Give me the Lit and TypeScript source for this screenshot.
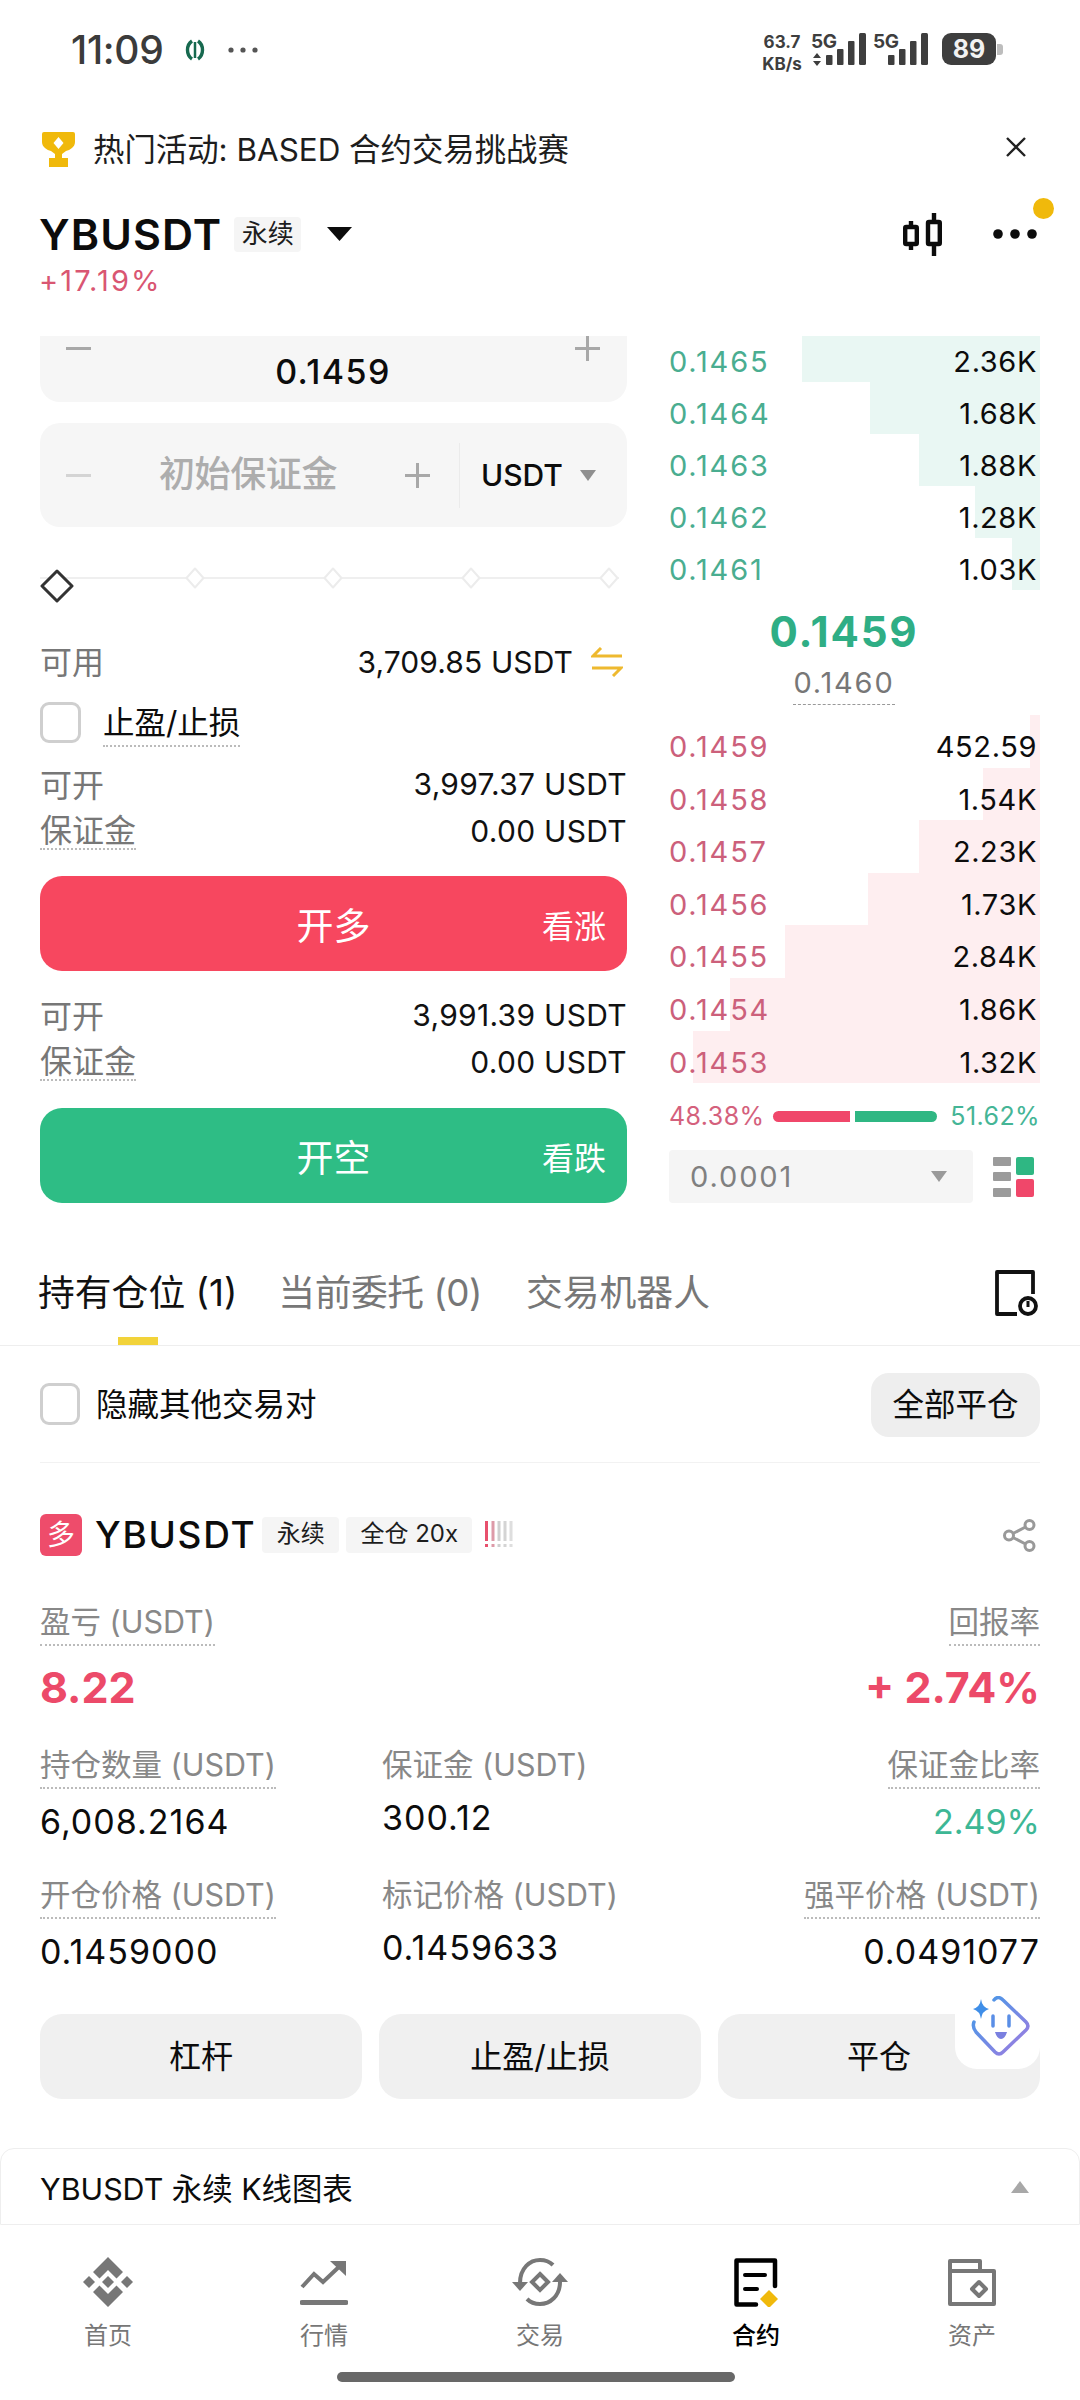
import { LitElement, html, css } from "lit";
import { customElement } from "lit/decorators.js";

const asks = [["0.1465","2.36K",238],["0.1464","1.68K",170],["0.1463","1.88K",121],["0.1462","1.28K",65],["0.1461","1.03K",28]] as const;
const bids = [["0.1459","452.59",10],["0.1458","1.54K",57],["0.1457","2.23K",121],["0.1456","1.73K",172],["0.1455","2.84K",255],["0.1454","1.86K",310],["0.1453","1.32K",347]] as const;

const sign = (plus: boolean, color: string) => html`<svg class="sign" viewBox="0 0 25 25" fill="none" stroke=${color} stroke-width="3"><path d=${plus ? "M0 12.5H25M12.5 0V25" : "M0 12.5H25"}></path></svg>`;
const tri = (cls: string, color = "#8f8f8f") => html`<svg class=${cls} viewBox="0 0 16 11"><path d="M0 0H16L8 11Z" fill=${color}></path></svg>`;
const bars = () => html`<svg class="bars" viewBox="0 0 40 32"><g fill="#3e3e3e"><rect x="0" y="22" width="6.5" height="10" rx="1"></rect><rect x="11" y="16" width="6.5" height="16" rx="1"></rect><rect x="22" y="8" width="6.5" height="24" rx="1"></rect><rect x="33" y="0" width="7" height="32" rx="1.5"></rect></g></svg>`;

@customElement("app-root")
export class AppRoot extends LitElement {
  static styles = css`
    :host { display: block; position: relative; width: 1080px; height: 2400px; overflow: hidden; background: #fff; color: #0c0c0c; font-family: Inter, "Noto Sans CJK SC", sans-serif; }
    svg { display: block; flex: none; }
    .status { height: 100px; box-sizing: border-box; padding: 31px 77px 0 71px; display: flex; align-items: flex-start; }
    .time { font: 500 39px/38px Inter, sans-serif; color: #3b3b3b; width: 114px; letter-spacing: -0.3px; }
    .applogo { width: 20px; height: 22px; margin-top: 8px; }
    .sdots { width: 30px; height: 6px; margin: 16px 0 0 23px; }
    .sright { margin-left: auto; display: flex; align-items: flex-start; color: #3e3e3e; font-weight: 700; font-size: 17px; line-height: 22px; margin-right: 0; }
    .speed { width: 48px; text-align: center; margin-left: -4px; white-space: nowrap; }
    .net { display: flex; width: 55px; margin-left: 5px; }
    .net + .net { margin-left: 7px; }
    .gcol { width: 26px; flex: none; font-size: 19px; letter-spacing: -0.5px; }
    .arrows { width: 8px; height: 13px; margin: 0 0 0 2px; }
    .bars { width: 40px; height: 32px; margin: 2px 0 0 -11px; }
    .battery { width: 54px; height: 32px; margin: 2px 0 0 14px; background: #3e3e3e; border-radius: 9px; color: #f2f2f2; font-size: 25px; line-height: 32px; text-align: center; flex: none; }
    .nub { width: 6px; height: 11px; margin: 13px 0 0 1px; background: #bdbdbd; border-radius: 0 3px 3px 0; flex: none; }

    .banner { height: 98px; box-sizing: border-box; padding: 0 54px 4px 42px; display: flex; align-items: center; font-size: 31.4px; color: #1d1d1d; }
    .trophy { width: 33px; height: 35px; margin: 4px 18px 0 0; }
    .close { width: 20px; height: 20px; margin: 0 0 0 auto; }

    .head { height: 72px; box-sizing: border-box; padding: 0 43px 0 39px; display: flex; align-items: center; }
    .sym { font-size: 43px; font-weight: 600; letter-spacing: 1.1px; line-height: 50px; }
    .tag { background: #f5f5f5; border-radius: 4px; font-size: 26px; color: #1d1d1d; }
    .head .tag { margin-left: 12px; width: 67px; height: 35px; line-height: 33px; text-align: center; }
    .caret { width: 25px; height: 14px; margin-left: 26px; }
    .candle { width: 39px; height: 43px; margin-left: auto; }
    .dots { width: 44px; height: 10px; margin-left: 51px; }
    .ydot { position: absolute; left: 1033px; top: 198px; width: 21px; height: 21px; border-radius: 50%; background: #f0b90b; }
    .chg { height: 66px; padding-left: 39px; font-size: 29px; letter-spacing: 2.1px; line-height: 22px; box-sizing: border-box; color: #d95672; }

    .trade { height: 874px; overflow: hidden; padding: 0 40px; display: flex; gap: 42px; }
    .left { width: 587px; flex: none; }
    .right { width: 371px; flex: none; }
    .sign { width: 25px; height: 25px; }
    .input { background: #f6f6f6; border-radius: 20px; }
    .i1 { height: 66px; padding: 0 27px 0 26px; border-radius: 0 0 20px 20px; display: flex; justify-content: space-between; align-items: flex-start; font-size: 34px; letter-spacing: 1.4px; }
    .i1 .val { line-height: 44px; margin-top: 14px; font-weight: 500; }
    .i2 { height: 104px; margin-top: 21px; padding-left: 26px; display: flex; align-items: center; }
    .ph { width: 177px; margin-left: 68px; font-size: 36px; line-height: 40px; margin-top: -3px; color: #adadad; font-weight: 500; white-space: nowrap; letter-spacing: -0.4px; }
    .i2 .plus { margin-left: 69px; width: 27px; }
    .i2 .sep { width: 1px; height: 65px; background: #ebebeb; margin-left: 27px; }
    .unit { font-size: 30px; font-weight: 500; margin-left: 21px; width: 81px; }
    .t1 { width: 16px; height: 11px; margin-left: 18px; }

    .slider { margin-top: 34px; height: 34px; display: flex; align-items: center; width: 579px; background: linear-gradient(#efefef, #efefef) center / 100% 2px no-repeat; }
    .dia { width: 20px; height: 22px; margin-left: 118px; }
    .dia.first { margin-left: 111px; }
    .dia.big { width: 34px; height: 34px; margin-left: 0; }

    .kv { display: flex; align-items: center; justify-content: space-between; height: 36px; font-size: 30px; color: #111; letter-spacing: 0.3px; }
    .k { color: #777; font-size: 32px; letter-spacing: 0; }
    .u { border-bottom: 2px dotted #bbb; }
    .avail { margin-top: 47px; height: 40px; }
    .avail .k { margin-top: -5px; }
    .avail .r { display: flex; align-items: center; gap: 18px; padding-right: 4px; letter-spacing: 0.1px; }
    .sw { width: 32px; height: 30px; }
    .stop { margin-top: 20px; height: 40px; display: flex; align-items: center; font-size: 31.5px; }
    .box { width: 36px; height: 36px; border: 3px solid #cfcfcf; border-radius: 9px; flex: none; box-sizing: content-box; }
    .stop .box { margin-right: 22px; width: 35px; height: 35px; }
    .stop span { line-height: 44px; margin-top: 4px; }
    .kv .k.u { line-height: 34px; margin-top: 4px; }
    .g1 { margin-top: 24px; }
    .g1 .k { margin-top: -3px; }
    .g2 { margin-top: 10px; }
    .g2 > span:last-child { margin-top: 2px; }
    .btn { height: 95px; border-radius: 22px; color: #fff; display: flex; align-items: center; justify-content: center; position: relative; font-size: 37px; font-weight: 400; }
    .btn small { position: absolute; right: 21px; font-size: 32px; font-weight: 400; }
    .long { background: #f7475f; margin-top: 28px; }
    .short { background: #2ebd85; margin-top: 29px; }
    .g3 { margin-top: 26px; }

    .book { margin-top: -6px; }
    .row { display: flex; justify-content: space-between; box-sizing: border-box; height: 52px; padding: 11px 3px 0 0; line-height: 42px; font-size: 29px; letter-spacing: 1.8px; background-repeat: no-repeat; background-position: right top; }
    .row span:last-child { letter-spacing: 0.6px; }
    .asks .row { background-image: linear-gradient(#e9f7f3, #e9f7f3); }
    .bids .row { height: 52.6px; background-image: linear-gradient(#feeef0, #feeef0); }
    .asks .p { color: #4aad90; }
    .bids .p { color: #cc607b; }
    .mid { height: 125px; display: flex; flex-direction: column; align-items: center; box-sizing: border-box; padding-top: 17px; width: 350px; }
    .last { font-size: 42px; font-weight: 700; line-height: 50px; color: #2fae85; letter-spacing: 1.8px; }
    .mark { font-size: 29px; line-height: 36px; margin-top: 8px; color: #777; padding-bottom: 3px; border-bottom: 1px dashed #999; letter-spacing: 1.8px; }
    .ratio { margin-top: 15px; display: flex; align-items: center; height: 36px; font-size: 25px; letter-spacing: 0.4px; }
    .ratio .a { color: #d4607c; width: 104px; }
    .ratio .b { color: #45b596; margin-left: auto; }
    .rbar { height: 11px; width: 164px; display: flex; gap: 5px; }
    .rbar i { display: block; height: 11px; }
    .rbar .ri { width: 77px; background: #f0476a; border-radius: 6px 0 0 6px; }
    .rbar .gi { width: 82px; background: #2fb783; border-radius: 0 6px 6px 0; }
    .foot { display: flex; align-items: center; margin-top: 16px; }
    .sel { width: 304px; height: 53px; box-sizing: border-box; padding: 0 26px 0 21px; background: #f5f5f5; border-radius: 4px; display: flex; align-items: center; justify-content: space-between; font-size: 29px; color: #808080; letter-spacing: 1.9px; }
    .sel svg { width: 16px; height: 11px; }
    .lay { width: 41px; height: 40px; margin-left: 20px; }

    .tabs { height: 136px; box-sizing: border-box; border-bottom: 1px solid #eee; padding: 60px 42px 0 38px; display: flex; align-items: flex-start; font-size: 36.8px; color: #777; line-height: 46px; }
    .tab { margin-right: 44px; white-space: nowrap; }
    .tab.on { color: #111; margin-right: 41px; }
    .tab.mid-tab { letter-spacing: -0.5px; }
    .ind { width: 40px; height: 8px; background: #f2d33a; margin: 21px 0 0 80px; }
    .hist { width: 43px; height: 46px; margin-left: auto; }

    .pos { padding: 0 40px; }
    .filter { height: 117px; box-sizing: border-box; padding-top: 27px; border-bottom: 1px solid #f2f2f2; display: flex; align-items: flex-start; font-size: 31.5px; }
    .filter .box { margin: 10px 16px 0 0; width: 34px; height: 36px; }
    .filter .txt { line-height: 64px; }
    .all { margin-left: auto; width: 169px; height: 64px; line-height: 64px; text-align: center; background: #eeeeee; border-radius: 18px; }

    .phead { margin-top: 51px; height: 42px; display: flex; align-items: center; }
    .duo { width: 42px; height: 42px; background: #ee4c6b; border-radius: 6px; color: #fff; font-size: 28px; line-height: 42px; text-align: center; flex: none; }
    .phead .sym { font-size: 37px; margin-left: 13px; font-weight: 500; letter-spacing: 1.7px; }
    .phead .tag { font-size: 24px; height: 36px; line-height: 34px; text-align: center; margin-left: 6px; }
    .phead .tag.a { width: 77px; }
    .phead .tag.b { width: 126px; margin-left: 7px; }
    .warn { width: 28px; height: 28px; margin-left: 13px; }
    .share { width: 33px; height: 33px; margin-left: auto; margin-right: 4px; }

    .line { display: flex; align-items: flex-start; }
    .cell { flex: none; }
    .cell.c1 { width: 342px; }
    .cell.end { margin-left: auto; text-align: right; display: flex; flex-direction: column; align-items: flex-end; }
    .lb { display: inline-block; font-size: 30.5px; line-height: 40px; color: #888; padding-bottom: 2px; border-bottom: 2px dotted transparent; white-space: nowrap; }
    .lb.u { border-bottom: 2px dotted #bbb; }
    .v { font-size: 34px; line-height: 40px; margin-top: 13px; letter-spacing: 1px; }
    .mv { margin-top: 9px; }
    .gv { color: #3db795; letter-spacing: 0; }
    .big { font-size: 43px; font-weight: 700; line-height: 50px; color: #ec4a69; margin-top: 16px; }
    .l1 { margin-top: 46px; }
    .l2 { margin-top: 33px; }
    .l3 { margin-top: 33px; }
    .acts { margin-top: 42px; display: flex; gap: 17px; }
    .act { flex: 1; height: 85px; line-height: 85px; border-radius: 22px; background: #f0f0f0; text-align: center; font-size: 32px; }
    .robot { position: absolute; left: 955px; top: 1982px; width: 85px; height: 87px; background: #fff; border-radius: 22px; display: flex; align-items: center; justify-content: center; }
    .robot svg { width: 60px; height: 60px; margin-left: 5px; }

    .kline { margin-top: 49px; height: 77px; box-sizing: border-box; border: 1px solid #eee; border-radius: 14px 14px 0 0; padding: 0 50px 0 39px; display: flex; align-items: center; justify-content: space-between; font-size: 30.4px; }
    .kline svg { width: 18px; height: 12px; }

    .nav { display: flex; padding-top: 32px; }
    .item { width: 216px; display: flex; flex-direction: column; align-items: center; color: #777; font-size: 24px; line-height: 30px; }
    .item.on { color: #000; font-weight: 500; }
    .ico { height: 50px; margin-bottom: 14px; display: flex; align-items: center; justify-content: center; }
    .homebar { width: 398px; height: 10px; border-radius: 5px; background: #686868; margin: 21px 0 0 337px; }
  `;

  private row(r: readonly [string, string, number]) {
    return html`<div class="row" style="background-size:${r[2]}px 100%"><span class="p">${r[0]}</span><span>${r[1]}</span></div>`;
  }

  render() {
    return html`
      <div class="status">
        <div class="time">11:09</div>
        <svg class="applogo" viewBox="0 0 20 22" fill="none" stroke="#17694f" stroke-width="3.4"><path d="M7 2C1 6 1 16 7 20M13 2C19 6 19 16 13 20"></path><path d="M10 3V19" stroke-width="2.5"></path></svg>
        <svg class="sdots" viewBox="0 0 30 6" fill="#555"><circle cx="3" cy="3" r="2.6"></circle><circle cx="15" cy="3" r="2.6"></circle><circle cx="27" cy="3" r="2.6"></circle></svg>
        <div class="sright">
          <div class="speed">63.7<br />KB/s</div>
          <div class="net"><div class="gcol">5G<svg class="arrows" viewBox="0 0 8 13" fill="#3e3e3e"><path d="M4 0L8 5H0ZM0 8H8L4 13Z"></path></svg></div>${bars()}</div>
          <div class="net"><div class="gcol">5G</div>${bars()}</div>
          <div class="battery">89</div>
          <div class="nub"></div>
        </div>
      </div>

      <div class="banner">
        <svg class="trophy" viewBox="0 0 33 35"><path fill="#f0b90b" d="M2 0H31Q33 0 33 2V10C33 15 28 18 24 19L20 22V26H26V35H7V26H13V22L9 19C5 18 0 15 0 10V2Q0 0 2 0Z"></path><path fill="#fff" d="M16.5 5L21.5 11L16.5 17L11.5 11Z"></path></svg>
        <span>热门活动: BASED 合约交易挑战赛</span>
        <svg class="close" viewBox="0 0 20 20" stroke="#222" stroke-width="2.4"><path d="M1 1L19 19M19 1L1 19"></path></svg>
      </div>

      <div class="head">
        <div class="sym">YBUSDT</div>
        <div class="tag">永续</div>
        <svg class="caret" viewBox="0 0 25 14"><path d="M0 0H25L12.5 14Z" fill="#0c0c0c"></path></svg>
        <svg class="candle" viewBox="0 0 39 43" fill="none" stroke="#0c0c0c" stroke-width="4.4"><path d="M8 8V37M31 0V43"></path><rect x="2.2" y="14" width="11.6" height="17" rx="1" fill="#fff"></rect><rect x="25" y="9" width="11.8" height="22" rx="1" fill="#fff"></rect></svg>
        <svg class="dots" viewBox="0 0 44 10" fill="#0c0c0c"><circle cx="5" cy="5" r="4.8"></circle><circle cx="22" cy="5" r="4.8"></circle><circle cx="39" cy="5" r="4.8"></circle></svg>
      </div>
      <div class="ydot"></div>
      <div class="chg">+17.19%</div>

      <div class="trade">
        <div class="left">
          <div class="input i1">${sign(false, "#a8a8a8")}<div class="val">0.1459</div>${sign(true, "#a8a8a8")}</div>
          <div class="input i2">
            ${sign(false, "#d4d4d4")}
            <div class="ph">初始保证金</div>
            <div class="plus">${sign(true, "#a8a8a8")}</div>
            <div class="sep"></div>
            <div class="unit">USDT</div>
            ${tri("t1")}
          </div>
          <div class="slider">
            <svg class="dia big" viewBox="0 0 34 34"><path d="M17 2L32 17L17 32L2 17Z" fill="#fff" stroke="#333" stroke-width="3" stroke-linejoin="round"></path></svg>
            ${[0, 1, 2, 3].map((i) => html`<svg class=${i === 0 ? "dia first" : "dia"} viewBox="0 0 20 22"><path d="M10 1.5L18.5 11L10 20.5L1.5 11Z" fill="#fff" stroke="#ececec" stroke-width="2" stroke-linejoin="round"></path></svg>`)}
          </div>
          <div class="kv avail">
            <span class="k">可用</span>
            <span class="r">3,709.85 USDT
              <svg class="sw" viewBox="0 0 32 30" fill="none" stroke="#eeb92f" stroke-width="3"><path d="M31 9H2L10 1M1 21H30L22 29"></path></svg>
            </span>
          </div>
          <div class="stop"><div class="box"></div><span class="u">止盈/止损</span></div>
          <div class="kv g1"><span class="k">可开</span><span>3,997.37 USDT</span></div>
          <div class="kv g2"><span class="k u">保证金</span><span>0.00 USDT</span></div>
          <div class="btn long">开多<small>看涨</small></div>
          <div class="kv g1 g3"><span class="k">可开</span><span>3,991.39 USDT</span></div>
          <div class="kv g2"><span class="k u">保证金</span><span>0.00 USDT</span></div>
          <div class="btn short">开空<small>看跌</small></div>
        </div>

        <div class="right">
          <div class="book asks">${asks.map((r) => this.row(r))}</div>
          <div class="mid">
            <div class="last">0.1459</div>
            <div class="mark">0.1460</div>
          </div>
          <div class="bids">${bids.map((r) => this.row(r))}</div>
          <div class="ratio">
            <span class="a">48.38%</span>
            <div class="rbar"><i class="ri"></i><i class="gi"></i></div>
            <span class="b">51.62%</span>
          </div>
          <div class="foot">
            <div class="sel"><span>0.0001</span>${tri("", "#9a9a9a")}</div>
            <svg class="lay" viewBox="0 0 41 40"><g fill="#9b9b9b"><rect x="0" y="0" width="18" height="9" rx="1"></rect><rect x="0" y="15" width="18" height="9" rx="1"></rect><rect x="0" y="31" width="18" height="9" rx="1"></rect></g><rect x="23" y="0" width="18" height="18" rx="2" fill="#2fb783"></rect><rect x="23" y="22" width="18" height="18" rx="2" fill="#f0476a"></rect></svg>
          </div>
        </div>
      </div>

      <div class="tabs">
        <div class="tab on">持有仓位 (1)<div class="ind"></div></div>
        <div class="tab mid-tab">当前委托 (0)</div>
        <div class="tab">交易机器人</div>
        <svg class="hist" viewBox="0 0 43 46" fill="none" stroke="#111" stroke-width="3.8"><path d="M22 44H2V2H38V24" stroke-linejoin="round"></path><circle cx="33" cy="36" r="8"></circle><path d="M33 31V37" stroke-width="3"></path></svg>
      </div>

      <div class="pos">
        <div class="filter">
          <div class="box"></div>
          <div class="txt">隐藏其他交易对</div>
          <div class="all">全部平仓</div>
        </div>

        <div class="phead">
          <div class="duo">多</div>
          <div class="sym">YBUSDT</div>
          <div class="tag a">永续</div>
          <div class="tag b">全仓 20x</div>
          <svg class="warn" viewBox="0 0 28 28"><g stroke-width="3" stroke-dasharray="20 3 3 2"><path d="M1.5 0V28" stroke="#e8506d"></path><path d="M8 0V28" stroke="#dd9aa8"></path><path d="M14 0V28" stroke="#cfcfcf"></path><path d="M20 0V28" stroke="#d4d4d4"></path><path d="M26 0V28" stroke="#dedede"></path></g></svg>
          <svg class="share" viewBox="0 0 33 33" fill="none" stroke="#999" stroke-width="3"><circle cx="26.5" cy="6" r="4.5"></circle><circle cx="6" cy="16.5" r="4.5"></circle><circle cx="26.5" cy="27" r="4.5"></circle><path d="M10 14.5L22.5 8M10 18.5L22.5 25"></path></svg>
        </div>

        <div class="line l1">
          <div class="cell"><span class="lb u">盈亏 (USDT)</span><div class="big">8.22</div></div>
          <div class="cell end"><span class="lb u">回报率</span><div class="big">+ 2.74%</div></div>
        </div>
        <div class="line l2">
          <div class="cell c1"><span class="lb u">持仓数量 (USDT)</span><div class="v">6,008.2164</div></div>
          <div class="cell"><span class="lb">保证金 (USDT)</span><div class="v mv">300.12</div></div>
          <div class="cell end"><span class="lb u">保证金比率</span><div class="v gv">2.49%</div></div>
        </div>
        <div class="line l3">
          <div class="cell c1"><span class="lb u">开仓价格 (USDT)</span><div class="v">0.1459000</div></div>
          <div class="cell"><span class="lb">标记价格 (USDT)</span><div class="v mv">0.1459633</div></div>
          <div class="cell end"><span class="lb u">强平价格 (USDT)</span><div class="v">0.0491077</div></div>
        </div>
        <div class="acts">
          <div class="act">杠杆</div>
          <div class="act">止盈/止损</div>
          <div class="act">平仓</div>
        </div>
      </div>

      <div class="robot">
        <svg viewBox="0 0 60 60" fill="none">
          <defs><linearGradient id="rg" x1="0" y1="0" x2="1" y2="1"><stop offset="0" stop-color="#3f9be8"></stop><stop offset="1" stop-color="#a27be0"></stop></linearGradient></defs>
          <path d="M24 4Q28 -1 33 4L56 26Q60 30 56 34L33 56Q29 60 25 56L6 36Q2 31 4 26" stroke="url(#rg)" stroke-width="3.5" stroke-linecap="round"></path>
          <path d="M11 3Q12 11 19 13Q12 15 11 23Q10 15 3 13Q10 11 11 3Z" fill="#3f8ee8"></path>
          <path d="M23 20V30M39 20V30" stroke="#5a8ee6" stroke-width="3.5" stroke-linecap="round"></path>
          <path d="M25 36H37Q35 43 31 43Q27 43 25 36Z" fill="#7a80e0"></path>
        </svg>
      </div>

      <div class="kline"><span>YBUSDT 永续 K线图表</span><svg viewBox="0 0 18 12"><path d="M0 12H18L9 0Z" fill="#a8a8a8"></path></svg></div>

      <div class="nav">
        <div class="item"><div class="ico"><svg width="50" height="50" viewBox="0 0 50 50" fill="#777"><path d="M25 0L40 15L33.5 21.5L25 13L16.5 21.5L10 15Z"></path><path d="M25 50L40 35L33.5 28.5L25 37L16.5 28.5L10 35Z"></path><path d="M25 19L31 25L25 31L19 25Z"></path><path d="M6 19L12 25L6 31L0 25Z"></path><path d="M44 19L50 25L44 31L38 25Z"></path></svg></div>首页</div>
        <div class="item"><div class="ico"><svg width="48" height="46" viewBox="0 0 48 46" fill="none" stroke="#777"><path d="M2 28L14 15L23 23L42 5" stroke-width="4"></path><path d="M30 2H46V17Z" fill="#777" stroke="none"></path><path d="M2 43.5H46" stroke-width="5" stroke-linecap="round"></path></svg></div>行情</div>
        <div class="item"><div class="ico"><svg width="60" height="48" viewBox="0 0 60 48" fill="none" stroke="#777" stroke-width="4"><path d="M10 25C10 10 20 2 30 2C36 2 40 4 43 7"></path><path d="M50 24C50 38 40 46 30 46C24 46 20 44 17 41"></path><path d="M2 24H18L10 33Z" fill="#777" stroke="none"></path><path d="M42 24H58L50 15Z" fill="#777" stroke="none"></path><path d="M30 16L38 24L30 32L22 24Z"></path></svg></div>交易</div>
        <div class="item on"><div class="ico"><svg width="44" height="49" viewBox="0 0 44 49" fill="none" stroke="#000" stroke-width="4.5" stroke-linecap="round"><path d="M22 46.5H2.5V2.5H41V28" stroke-linejoin="round"></path><path d="M11 17H31M11 31H23" stroke-width="4"></path><path d="M35 32L44 41L35 50L26 41Z" fill="#f0b90b" stroke="none"></path></svg></div>合约</div>
        <div class="item"><div class="ico"><svg width="48" height="47" viewBox="0 0 48 47" fill="none" stroke="#777" stroke-width="4" stroke-linejoin="round"><path d="M2 45V2H32V12H46V45Z"></path><path d="M2 12H32"></path><path d="M31 23L38 30L31 37L24 30Z"></path></svg></div>资产</div>
      </div>
      <div class="homebar"></div>
    `;
  }
}
